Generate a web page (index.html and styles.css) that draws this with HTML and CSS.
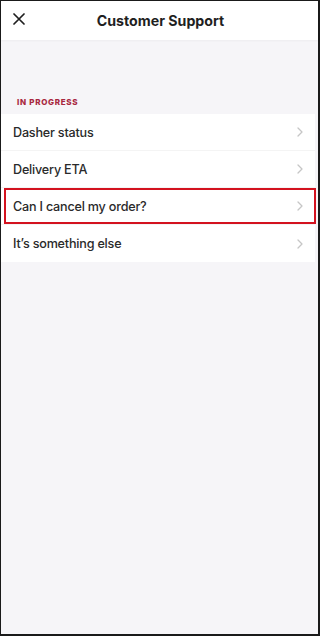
FILE: index.html
```html
<!DOCTYPE html>
<html lang="en">

<head>
    <meta charset="UTF-8">
    <meta name="viewport" content="width=device-width, initial-scale=1.0">
    <title>Customer Support</title>
    <link rel="stylesheet" href="styles.css">
</head>

<body>
    <div class="screen">
        <div class="header">
            <svg class="close-icon" width="12" height="12" viewBox="0 0 12 12">
                <path d="M1 1 L11 11 M11 1 L1 11" stroke="#1f1f1f" stroke-width="1.7" stroke-linecap="round" fill="none"/>
            </svg>
            <div class="title">Customer Support</div>
        </div>

        <div class="content">
            <div class="section-label">IN PROGRESS</div>
            <div class="list">
                <div class="row">
                    <span>Dasher status</span>
                    <svg class="chevron" width="6" height="10" viewBox="0 0 6 10"><path d="M1 1 L5 5 L1 9" stroke="#c6c6c6" stroke-width="1.3" fill="none" stroke-linecap="round" stroke-linejoin="round"/></svg>
                </div>
                <div class="row">
                    <span>Delivery ETA</span>
                    <svg class="chevron" width="6" height="10" viewBox="0 0 6 10"><path d="M1 1 L5 5 L1 9" stroke="#c6c6c6" stroke-width="1.3" fill="none" stroke-linecap="round" stroke-linejoin="round"/></svg>
                </div>
                <div class="row highlighted">
                    <span>Can I cancel my order?</span>
                    <svg class="chevron" width="6" height="10" viewBox="0 0 6 10"><path d="M1 1 L5 5 L1 9" stroke="#c6c6c6" stroke-width="1.3" fill="none" stroke-linecap="round" stroke-linejoin="round"/></svg>
                </div>
                <div class="row">
                    <span>It’s something else</span>
                    <svg class="chevron" width="6" height="10" viewBox="0 0 6 10"><path d="M1 1 L5 5 L1 9" stroke="#c6c6c6" stroke-width="1.3" fill="none" stroke-linecap="round" stroke-linejoin="round"/></svg>
                </div>
            </div>
        </div>
    </div>
</body>

</html>
```

FILE: styles.css
```css
body {
    margin: 0;
    font-family: Inter, "Noto Sans", sans-serif;
    background-color: #ffffff;
}

.screen {
    width: 320px;
    height: 636px;
    box-sizing: border-box;
    border-top: 1px solid #1a1a1a;
    border-left: 1px solid #1a1a1a;
    border-right: 2px solid #1a1a1a;
    border-bottom: 2px solid #1a1a1a;
    background-color: #f6f5f8;
    display: flex;
    flex-direction: column;
}

.header {
    height: 39px;
    background-color: #ffffff;
    display: flex;
    align-items: center;
    justify-content: center;
    position: relative;
    box-shadow: 0 1px 2px rgba(0, 0, 0, 0.04);
}

.close-icon {
    position: absolute;
    left: 12px;
    top: 12px;
}

.title {
    font-size: 14.2px;
    font-weight: 700;
    color: #1f1f1f;
    margin-left: 2px;
}

.content {
    flex: 1;
}

.section-label {
    margin-top: 57px;
    padding-left: 16px;
    font-size: 8px;
    font-weight: 800;
    letter-spacing: 0.7px;
    color: #a8283f;
    height: 17px;
}

.list {
    background-color: #ffffff;
    margin-right: 3px;
}

.row {
    height: 37px;
    display: flex;
    align-items: center;
    justify-content: space-between;
    padding: 0 12px 0 12px;
    font-size: 12.6px;
    font-weight: 500;
    letter-spacing: -0.2px;
    color: #2a2a2a;
    border-bottom: 1px solid #f4f4f4;
    box-sizing: border-box;
    position: relative;
}

.row:last-child {
    border-bottom: none;
}

.highlighted::after {
    content: "";
    position: absolute;
    left: 3px;
    right: -1px;
    top: 0;
    bottom: 0;
    border: 2px solid #d3121f;
}
```
